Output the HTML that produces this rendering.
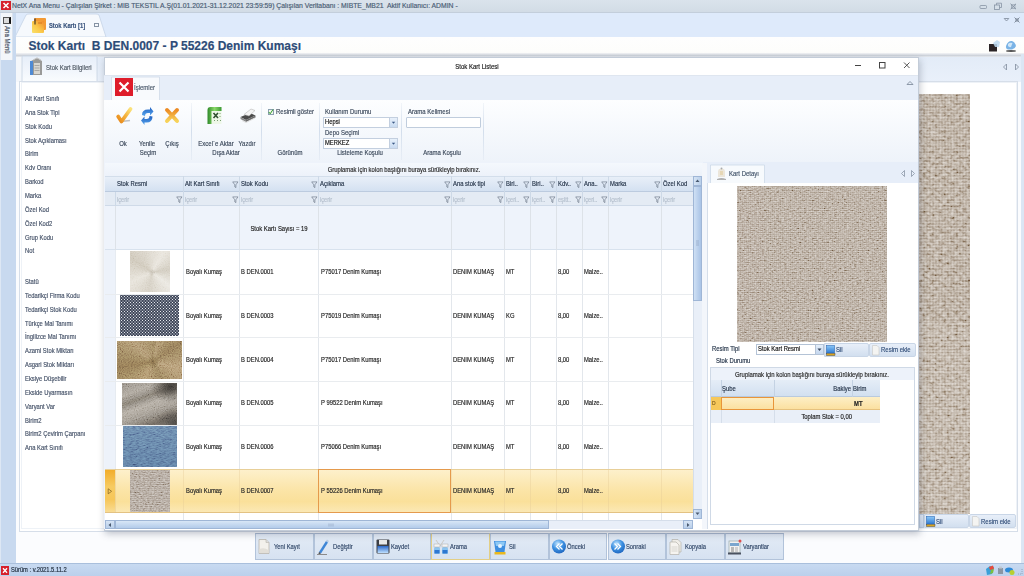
<!DOCTYPE html>
<html><head><meta charset="utf-8">
<style>
*{margin:0;padding:0;box-sizing:border-box}
html,body{width:1024px;height:576px;overflow:hidden;background:#dfeaf9;font-family:"Liberation Sans",sans-serif;font-size:6px;color:#1e2b3c}
.a{position:absolute}
.t{position:absolute;white-space:pre;line-height:1;-webkit-text-stroke:0.18px currentColor}
svg{position:absolute;overflow:visible}
</style></head><body>

<div class="a" style="left:0px;top:0px;width:1024px;height:13px;background:linear-gradient(#dae3ec,#d2dce6);border-bottom:1px solid #c3cedb"></div>
<div class="a" style="left:1px;top:1px;width:10px;height:9px;background:#d6202c"></div>
<svg style="left:1px;top:1px" width="10" height="9"><path d="M2.5 2 L7.5 7 M7.5 2 L2.5 7" stroke="#fff" stroke-width="1.6"/></svg>
<div class="t" style="left:12px;top:2.76px;font-size:6.82px;color:#4b5e76">NetX Ana Menu - Çalışılan Şirket : MIB TEKSTIL A.Ş(01.01.2021-31.12.2021 23:59:59) Çalışılan Veritabanı : MIBTE_MB21  Aktif Kullanıcı: ADMIN -</div>
<svg style="left:978px;top:2px" width="44" height="9"><rect x="2" y="3.5" width="6.5" height="3" rx="0.8" fill="none" stroke="#8693a3" stroke-width="0.8"/><rect x="16.5" y="3" width="5" height="4.5" fill="none" stroke="#8693a3" stroke-width="0.8"/><path d="M18.5 3V1.2H23.5V5.5H21.5" fill="none" stroke="#8693a3" stroke-width="0.8"/><path d="M32.5 1.8L38 7.2M38 1.8L32.5 7.2" stroke="#8693a3" stroke-width="1"/><rect x="33.5" y="2.8" width="3.5" height="3.5" fill="none" stroke="#8693a3" stroke-width="0.6"/></svg>
<div class="a" style="left:14px;top:13px;width:1010px;height:24px;background:#deeafb"></div>
<svg style="left:14px;top:13px" width="95" height="24"><path d="M1 24 L12 2 Q13 1 15 1 L82 1 Q84 1 85 2 L92 24 Z" fill="#f6f9fd" stroke="#c5d3e6" stroke-width="0.8"/></svg>
<svg style="left:31px;top:16.5px" width="16" height="17"><defs><linearGradient id="fo" x1="1" y1="0" x2="0" y2="1"><stop offset="0" stop-color="#f08a2c"/><stop offset=".55" stop-color="#fbc94a"/><stop offset="1" stop-color="#f9e06a"/></linearGradient></defs><rect x="3" y="1" width="12" height="12" rx="1" fill="#f39a34"/><rect x="1" y="4" width="12" height="12" rx="1" fill="url(#fo)"/><path d="M4 1.5V7.5" stroke="#222" stroke-width="1"/><path d="M7 6 L11 6" stroke="#d06a1a" stroke-width=".8"/></svg>
<div class="t" style="left:48.5px;transform-origin:0 50%;top:22.83px;font-size:7.08px;transform:scaleX(0.820);font-weight:bold;color:#3a557e">Stok Kartı [1]</div>
<div class="a" style="left:94px;top:23px;width:5px;height:4px;border:1px solid #8592a3"></div>
<svg style="left:1002px;top:16px" width="20" height="8"><path d="M2.2 2.5 L4.5 5 L6.8 2.5 Z" fill="none" stroke="#7c8898" stroke-width="0.8"/><path d="M12.5 1.5 L17.5 6.5 M17.5 1.5 L12.5 6.5" stroke="#7c8898" stroke-width="0.9"/><rect x="13.5" y="2.5" width="3" height="3" fill="none" stroke="#7c8898" stroke-width="0.5"/></svg>
<div class="a" style="left:14px;top:36.5px;width:1010px;height:16px;background:linear-gradient(#fefefe,#fdfdfb)"></div>
<div class="t" style="left:28.5px;top:40.12px;font-size:12px;font-weight:bold;color:#2d4c78">Stok Kartı  B DEN.0007 - P 55226 Denim Kumaşı</div>
<svg style="left:987px;top:39px" width="32" height="14"><rect x="2" y="5" width="8" height="7.5" fill="#2a2426"/><path d="M6 4 L10 1 L13 3 L12 8 L8 8Z" fill="#bcd8f0" opacity=".85"/><path d="M19 7 Q21 1.5 25 2 Q28 3 29 7 Q28 10 25 10.5 L21 10.5 Q18.5 9.5 19 7Z" fill="#7ab3e6"/><path d="M21 5 Q23 3 25.5 4 L24 8 Q22 8.5 21 7Z" fill="#cfe6f8"/><ellipse cx="24" cy="12" rx="5" ry="0.9" fill="#555"/></svg>
<div class="a" style="left:0px;top:13px;width:15.5px;height:551px;background:#c8d9ef;border-left:1px solid #dde7f4"></div>
<div class="a" style="left:1px;top:13px;width:12px;height:47px;background:#f3f6fa;border-right:1px solid #d9e2ee"></div>
<div class="a" style="left:3px;top:17px;width:8px;height:7px;background:#dcdcdc;border:1px solid #555;border-right:2px solid #111"></div>
<div class="t" style="left:10px;top:26px;font-size:6.6px;color:#4a5566;transform-origin:0 0;transform:rotate(90deg) scaleX(0.92)">Ana Menü</div>
<div class="a" style="left:15.5px;top:54px;width:1008.5px;height:510px;background:#fbfcfe"></div>
<div class="a" style="left:15.5px;top:54px;width:1008.5px;height:28px;background:linear-gradient(#e2ebf7,#e9f0fa)"></div>
<div class="a" style="left:15.5px;top:54px;width:6.5px;height:28px;background:#f4f7fb"></div>
<div class="a" style="left:15.5px;top:52.5px;width:1008.5px;height:4.5px;background:linear-gradient(#f3f4f6,#d3d8df 55%,#c9ced6 70%,#eef1f5)"></div>
<svg style="left:21px;top:55px" width="78" height="27"><path d="M1 27 V2 Q1 1 2 1 H75 Q76 1 76 2 V27" fill="url(#tg)" stroke="#c7d3e2" stroke-width="0.8"/><defs><linearGradient id="tg" x1="0" y1="0" x2="0" y2="1"><stop offset="0" stop-color="#e6eef9"/><stop offset="1" stop-color="#fafcfe"/></linearGradient></defs></svg>
<svg style="left:28px;top:57px" width="17" height="20"><path d="M3 4 L9 1 L14 4 V18 H3 Z" fill="#9a9a98"/><rect x="2" y="4" width="3" height="14" fill="#4f8ad4"/><rect x="6" y="6" width="6" height="11" fill="#d8d6d0"/><path d="M6.5 8.5H11.5M6.5 11H11.5M6.5 13.5H11.5" stroke="#888" stroke-width="0.6"/><path d="M5 3 L9 0.8 L13 3" fill="none" stroke="#c8c8c8" stroke-width="1"/></svg>
<div class="t" style="left:45.5px;transform-origin:0 50%;top:64.21px;font-size:7.32px;transform:scaleX(0.820);color:#505a66">Stok Kart Bilgileri</div>
<div class="a" style="left:18.5px;top:80.5px;width:999px;height:451px;background:#fff;border:1px solid #d6dee9"></div>
<div class="a" style="left:21px;top:82px;width:996px;height:447px;border:1px solid #eef2f7"></div>
<div class="t" style="left:24.5px;transform-origin:0 50%;top:96.00px;font-size:7.14px;transform:scaleX(0.820);color:#465369">Alt Kart Sınıfı</div>
<div class="t" style="left:24.5px;transform-origin:0 50%;top:109.85px;font-size:7.14px;transform:scaleX(0.820);color:#465369">Ana Stok Tipi</div>
<div class="t" style="left:24.5px;transform-origin:0 50%;top:123.70px;font-size:7.14px;transform:scaleX(0.820);color:#465369">Stok Kodu</div>
<div class="t" style="left:24.5px;transform-origin:0 50%;top:137.55px;font-size:7.14px;transform:scaleX(0.820);color:#465369">Stok Açıklaması</div>
<div class="t" style="left:24.5px;transform-origin:0 50%;top:151.40px;font-size:7.14px;transform:scaleX(0.820);color:#465369">Birim</div>
<div class="t" style="left:24.5px;transform-origin:0 50%;top:165.25px;font-size:7.14px;transform:scaleX(0.820);color:#465369">Kdv Oranı</div>
<div class="t" style="left:24.5px;transform-origin:0 50%;top:179.10px;font-size:7.14px;transform:scaleX(0.820);color:#465369">Barkod</div>
<div class="t" style="left:24.5px;transform-origin:0 50%;top:192.95px;font-size:7.14px;transform:scaleX(0.820);color:#465369">Marka</div>
<div class="t" style="left:24.5px;transform-origin:0 50%;top:206.80px;font-size:7.14px;transform:scaleX(0.820);color:#465369">Özel Kod</div>
<div class="t" style="left:24.5px;transform-origin:0 50%;top:220.65px;font-size:7.14px;transform:scaleX(0.820);color:#465369">Özel Kod2</div>
<div class="t" style="left:24.5px;transform-origin:0 50%;top:234.50px;font-size:7.14px;transform:scaleX(0.820);color:#465369">Grup Kodu</div>
<div class="t" style="left:24.5px;transform-origin:0 50%;top:248.35px;font-size:7.14px;transform:scaleX(0.820);color:#465369">Not</div>
<div class="t" style="left:24.5px;transform-origin:0 50%;top:279.00px;font-size:7.14px;transform:scaleX(0.820);color:#465369">Statü</div>
<div class="t" style="left:24.5px;transform-origin:0 50%;top:292.85px;font-size:7.14px;transform:scaleX(0.820);color:#465369">Tedarikçi Firma Kodu</div>
<div class="t" style="left:24.5px;transform-origin:0 50%;top:306.70px;font-size:7.14px;transform:scaleX(0.820);color:#465369">Tedarikçi Stok Kodu</div>
<div class="t" style="left:24.5px;transform-origin:0 50%;top:320.55px;font-size:7.14px;transform:scaleX(0.820);color:#465369">Türkçe Mal Tanımı</div>
<div class="t" style="left:24.5px;transform-origin:0 50%;top:334.40px;font-size:7.14px;transform:scaleX(0.820);color:#465369">İngilizce Mal Tanımı</div>
<div class="t" style="left:24.5px;transform-origin:0 50%;top:348.25px;font-size:7.14px;transform:scaleX(0.820);color:#465369">Azami Stok Miktarı</div>
<div class="t" style="left:24.5px;transform-origin:0 50%;top:362.10px;font-size:7.14px;transform:scaleX(0.820);color:#465369">Asgari Stok Miktarı</div>
<div class="t" style="left:24.5px;transform-origin:0 50%;top:375.95px;font-size:7.14px;transform:scaleX(0.820);color:#465369">Eksiye Düşebilir</div>
<div class="t" style="left:24.5px;transform-origin:0 50%;top:389.80px;font-size:7.14px;transform:scaleX(0.820);color:#465369">Ekside Uyarmasın</div>
<div class="t" style="left:24.5px;transform-origin:0 50%;top:403.65px;font-size:7.14px;transform:scaleX(0.820);color:#465369">Varyant Var</div>
<div class="t" style="left:24.5px;transform-origin:0 50%;top:417.50px;font-size:7.14px;transform:scaleX(0.820);color:#465369">Birim2</div>
<div class="t" style="left:24.5px;transform-origin:0 50%;top:431.35px;font-size:7.14px;transform:scaleX(0.820);color:#465369">Birim2 Çevirim Çarpanı</div>
<div class="t" style="left:24.5px;transform-origin:0 50%;top:445.20px;font-size:7.14px;transform:scaleX(0.820);color:#465369">Ana Kart Sınıfı</div>
<svg style="left:1002px;top:63px" width="18" height="8"><path d="M4.5 1 L1.5 4 L4.5 7 Z M13.5 1 L16.5 4 L13.5 7 Z" fill="none" stroke="#8a96a6" stroke-width="0.9"/></svg>
<div class="a" style="left:1021px;top:54px;width:3px;height:510px;background:#dbe6f4"></div>
<div class="a" style="left:919px;top:94px;width:51px;height:420px;background:repeating-linear-gradient(0deg,rgba(255,255,255,.12) 0 1.5px,rgba(60,40,20,.08) 1.5px 3px),repeating-linear-gradient(90deg,rgba(255,255,255,.1) 0 1.5px,rgba(60,40,20,.06) 1.5px 3px),#b3a493;isolation:isolate;overflow:hidden"><svg style="left:0;top:0;mix-blend-mode:overlay;opacity:0.5" width="51" height="420"><filter id="nz1" x="0" y="0" width="100%" height="100%"><feTurbulence type="fractalNoise" baseFrequency="0.25 0.35" numOctaves="2" seed="7"/><feColorMatrix values="1.6 0 0 0 -0.3  1.6 0 0 0 -0.3  1.6 0 0 0 -0.3  0 0 0 0 1"/></filter><rect width="51" height="420" filter="url(#nz1)"/></svg></div>
<div class="a" style="left:919px;top:514px;width:5px;height:14px;background:linear-gradient(#e0e9f6,#c8d8ee);border:1px solid #b9c9de"></div>
<div class="a" style="left:924px;top:514px;width:45px;height:14px;background:linear-gradient(#e8eff9,#d2dfef);border:1px solid #c9d6e7;border-radius:0 2px 2px 0"></div>
<svg style="left:925.5px;top:516px" width="10" height="11"><rect x="0.5" y="0.5" width="8" height="7.5" fill="url(#mon)" stroke="#2f6db8" stroke-width="0.6"/><rect x="0.5" y="8.5" width="8.5" height="2" fill="#d9a520" stroke="#333" stroke-width="0.4"/><defs><linearGradient id="mon" x1="0" y1="0" x2="0" y2="1"><stop offset="0" stop-color="#8cc8f8"/><stop offset="1" stop-color="#2f7ad0"/></linearGradient></defs></svg>
<div class="t" style="left:935.5px;transform-origin:0 50%;top:517.61px;font-size:7.32px;transform:scaleX(0.820);color:#34507a">Sil</div>
<div class="a" style="left:969px;top:514px;width:46.5px;height:14px;background:linear-gradient(#e8eff9,#d2dfef);border:1px solid #c9d6e7;border-radius:2px"></div>
<svg style="left:971px;top:516px" width="9" height="11"><path d="M1.5 0.5 H6 L8 2.5 V10 H1.5 Z" fill="#f4f4f2" stroke="#c8c8c4" stroke-width="0.6"/></svg>
<div class="t" style="left:980.5px;transform-origin:0 50%;top:517.61px;font-size:7.32px;transform:scaleX(0.820);color:#34507a">Resim ekle</div>
<div class="a" style="left:255.3px;top:533px;width:58.7px;height:27px;background:linear-gradient(#e3ebf6,#d6e2f1);border:1px solid #b2c3da;border-top-color:#a9b9cf"></div>
<svg style="left:257.3px;top:538px" width="16" height="18"><path d="M2 1.5 H9 L12 4.5 V15.5 H2 Z" fill="#f3f1ec" stroke="#b9b5ad" stroke-width="0.8"/><path d="M9 1.5 V4.5 H12" fill="#ddd" stroke="#b9b5ad" stroke-width="0.6"/><path d="M2.5 11 Q7 9 11.5 12 V15 H2.5Z" fill="#e2dfd8"/></svg>
<div class="t" style="left:273.8px;transform-origin:0 50%;top:543.63px;font-size:7.08px;transform:scaleX(0.820);color:#33496a">Yeni Kayıt</div>
<div class="a" style="left:314.0px;top:533px;width:58.7px;height:27px;background:linear-gradient(#e3ebf6,#d6e2f1);border:1px solid #b2c3da;border-top-color:#a9b9cf"></div>
<svg style="left:316.0px;top:538px" width="16" height="18"><path d="M3 14 L10 3 L12 4.5 L5 15.5 Z" fill="#3f86d6"/><path d="M10 3 L11 1.5 L13 3 L12 4.5Z" fill="#b9cde5"/><path d="M3 14 L2.5 16 L5 15.5Z" fill="#333"/><path d="M1 16.5 H11" stroke="#8a8a8a" stroke-width="1"/></svg>
<div class="t" style="left:332.5px;transform-origin:0 50%;top:543.63px;font-size:7.08px;transform:scaleX(0.820);color:#33496a">Değiştir</div>
<div class="a" style="left:372.7px;top:533px;width:58.7px;height:27px;background:linear-gradient(#e3ebf6,#d6e2f1);border:1px solid #b2c3da;border-top-color:#a9b9cf"></div>
<svg style="left:374.7px;top:538px" width="16" height="18"><rect x="1.5" y="1.5" width="13" height="14" rx="1" fill="#3d3f45"/><rect x="4" y="2" width="8" height="4.5" fill="#e8e8e8"/><rect x="2.5" y="8" width="11" height="7" fill="url(#flg)"/><defs><linearGradient id="flg" x1="0" y1="0" x2="0" y2="1"><stop offset="0" stop-color="#2a67c8"/><stop offset="1" stop-color="#bfe0ff"/></linearGradient></defs></svg>
<div class="t" style="left:391.20000000000005px;transform-origin:0 50%;top:543.63px;font-size:7.08px;transform:scaleX(0.820);color:#33496a">Kaydet</div>
<div class="a" style="left:431.4px;top:533px;width:58.7px;height:27px;background:linear-gradient(#e3ebf6,#d6e2f1);border:1px solid #e3cf86;border-top-color:#a9b9cf"></div>
<svg style="left:433.4px;top:538px" width="16" height="18"><path d="M3 2 L7 8 L11 2" fill="none" stroke="#c8c2b8" stroke-width="0.8"/><rect x="1" y="9" width="6" height="7" rx="1.5" fill="#8cc4f0"/><rect x="9" y="9" width="6" height="7" rx="1.5" fill="#8cc4f0"/><rect x="1.5" y="12" width="5" height="3.5" fill="#2f78d0"/><rect x="9.5" y="12" width="5" height="3.5" fill="#2f78d0"/><rect x="1" y="6" width="6" height="3" fill="#f4f4f4" stroke="#aaa" stroke-width=".5"/><rect x="9" y="6" width="6" height="3" fill="#f4f4f4" stroke="#aaa" stroke-width=".5"/></svg>
<div class="t" style="left:449.90000000000003px;transform-origin:0 50%;top:543.63px;font-size:7.08px;transform:scaleX(0.820);color:#33496a">Arama</div>
<div class="a" style="left:490.1px;top:533px;width:58.7px;height:27px;background:linear-gradient(#e3ebf6,#d6e2f1);border:1px solid #b2c3da;border-top-color:#a9b9cf"></div>
<svg style="left:492.1px;top:538px" width="16" height="18"><path d="M2 3 H14 L12.5 14 H3.5 Z" fill="#3d8ee0"/><path d="M3 3.5 H13 L12 8 H4Z" fill="#8cc8f5"/><circle cx="8" cy="8" r="2" fill="#e8f4ff"/><rect x="2.5" y="14" width="11" height="2.5" fill="#e8b820"/></svg>
<div class="t" style="left:508.6px;transform-origin:0 50%;top:543.63px;font-size:7.08px;transform:scaleX(0.820);color:#33496a">Sil</div>
<div class="a" style="left:548.8px;top:533px;width:58.7px;height:27px;background:linear-gradient(#e3ebf6,#d6e2f1);border:1px solid #b2c3da;border-top-color:#a9b9cf"></div>
<svg style="left:550.8px;top:538px" width="16" height="18"><circle cx="8" cy="8.5" r="7" fill="url(#sph)"/><path d="M8.5 5.5 L5.5 8.5 L8.5 11.5 M11.5 5.5 L8.5 8.5 L11.5 11.5" fill="none" stroke="#fff" stroke-width="1.3"/><defs><radialGradient id="sph" cx=".4" cy=".3" r=".8"><stop offset="0" stop-color="#bfe4ff"/><stop offset=".5" stop-color="#3b8fe0"/><stop offset="1" stop-color="#1a5db8"/></radialGradient></defs></svg>
<div class="t" style="left:567.3px;transform-origin:0 50%;top:543.63px;font-size:7.08px;transform:scaleX(0.820);color:#33496a">Önceki</div>
<div class="a" style="left:607.5px;top:533px;width:58.7px;height:27px;background:linear-gradient(#e3ebf6,#d6e2f1);border:1px solid #b2c3da;border-top-color:#a9b9cf"></div>
<svg style="left:609.5px;top:538px" width="16" height="18"><circle cx="8" cy="8.5" r="7" fill="url(#sph)"/><path d="M7.5 5.5 L10.5 8.5 L7.5 11.5 M4.5 5.5 L7.5 8.5 L4.5 11.5" fill="none" stroke="#fff" stroke-width="1.3"/></svg>
<div class="t" style="left:626.0px;transform-origin:0 50%;top:543.63px;font-size:7.08px;transform:scaleX(0.820);color:#33496a">Sonraki</div>
<div class="a" style="left:666.2px;top:533px;width:58.7px;height:27px;background:linear-gradient(#e3ebf6,#d6e2f1);border:1px solid #b2c3da;border-top-color:#a9b9cf"></div>
<svg style="left:668.2px;top:538px" width="16" height="18"><path d="M4 1.5 H10 L13 4.5 V14 H4 Z" fill="#f0eee9" stroke="#b5b1aa" stroke-width="0.7"/><path d="M2 4 H8 L11 7 V16.5 H2 Z" fill="#f6f4f0" stroke="#b5b1aa" stroke-width="0.7"/><path d="M3.5 9H9.5M3.5 11H9.5M3.5 13H9.5" stroke="#c8c4bc" stroke-width="0.6"/></svg>
<div class="t" style="left:684.7px;transform-origin:0 50%;top:543.63px;font-size:7.08px;transform:scaleX(0.820);color:#33496a">Kopyala</div>
<div class="a" style="left:724.9px;top:533px;width:58.7px;height:27px;background:linear-gradient(#e3ebf6,#d6e2f1);border:1px solid #b2c3da;border-top-color:#a9b9cf"></div>
<svg style="left:726.9px;top:538px" width="16" height="18"><rect x="2" y="3" width="11" height="12" fill="#f2f2f2" stroke="#9aa" stroke-width="0.7"/><rect x="3" y="5" width="9" height="3" fill="#7aa6cf"/><rect x="4" y="9" width="3" height="5" fill="#b8b8b8"/><rect x="8" y="9" width="3" height="5" fill="#d0d0d0"/><rect x="1" y="14.5" width="13" height="2" fill="#4a5260"/><circle cx="13" cy="3" r="1.5" fill="#e05050"/></svg>
<div class="t" style="left:743.4000000000001px;transform-origin:0 50%;top:543.63px;font-size:7.08px;transform:scaleX(0.820);color:#33496a">Varyantlar</div>
<div class="a" style="left:0px;top:563px;width:1024px;height:13px;background:linear-gradient(#c8daf1,#bbd0ec);border-top:1px solid #a9bfdc"></div>
<div class="a" style="left:1px;top:566px;width:8px;height:9px;background:#d6202c"></div>
<svg style="left:1px;top:566px" width="8" height="9"><path d="M2 2.2L6 6.7M6 2.2L2 6.7" stroke="#fff" stroke-width="1.3"/></svg>
<div class="t" style="left:11px;transform-origin:0 50%;top:566.06px;font-size:7.01px;transform:scaleX(0.820);color:#1d2a3a">Sürüm : v.2021.5.11.2</div>
<svg style="left:985px;top:565px" width="39" height="11"><path d="M1 4 L5 1 L9 2 L7 9 L2 10 Z" fill="#3aa0d8"/><path d="M4 2 L8 0.5 L9 4 L5 5Z" fill="#e84a3a"/><path d="M6 5 L9 4 L8 8 L5 9Z" fill="#7cc040"/><rect x="13" y="3" width="5" height="6" fill="#8a96a4"/><rect x="14" y="1.5" width="3" height="2" fill="#c0c8d2"/><ellipse cx="24" cy="5" rx="4" ry="2.5" fill="#2e8ad8"/><circle cx="27" cy="7.5" r="2.5" fill="#b8d030"/><path d="M37 4V9H32" fill="none" stroke="#8a9ab0" stroke-width="0.8" stroke-dasharray="1 1"/></svg>
<div class="a" style="left:104px;top:57px;width:815px;height:474px;background:#fff;border:1px solid #c3ccd8;box-shadow:1px 3px 7px rgba(60,70,90,0.3)"></div>
<div class="t" style="left:277px;width:400px;text-align:center;transform-origin:50% 50%;top:63.01px;font-size:7.32px;transform:scaleX(0.820);color:#1a1a1a">Stok Kart Listesi</div>
<svg style="left:850px;top:60px" width="64" height="12"><path d="M5 5.5 H11" stroke="#444" stroke-width="1"/><rect x="29.5" y="2.5" width="5.5" height="5.5" fill="none" stroke="#444" stroke-width="1"/><path d="M54 2.5 L59.5 8 M59.5 2.5 L54 8" stroke="#444" stroke-width="0.9"/></svg>
<div class="a" style="left:104px;top:74.5px;width:814px;height:25.5px;background:#e7eef9;border-top:1px solid #dfe6f0"></div>
<svg style="left:111px;top:76px" width="50" height="25"><path d="M0.5 25 V1 H48.5 V25" fill="#f8fafd" stroke="#d0dbe9" stroke-width="0.8"/></svg>
<div class="a" style="left:115px;top:78px;width:18px;height:18px;background:#de1c2a"></div>
<svg style="left:115px;top:78px" width="18" height="18"><path d="M4.5 4.5 L13.5 13.5 M13.5 4.5 L4.5 13.5" stroke="#fff" stroke-width="2.2"/></svg>
<div class="t" style="left:133.5px;transform-origin:0 50%;top:83.91px;font-size:7.32px;transform:scaleX(0.820);color:#4c5a6c">İşlemler</div>
<svg style="left:906px;top:80px" width="8" height="6"><path d="M1 4.5 L4 1.5 L7 4.5 Z" fill="none" stroke="#8390a0" stroke-width="0.9"/></svg>
<div class="a" style="left:104px;top:100px;width:814px;height:63px;background:linear-gradient(#fdfeff,#eef3fa);border-bottom:1px solid #c9d5e6"></div>
<div class="a" style="left:190.5px;top:103px;width:1px;height:57px;background:linear-gradient(rgba(200,212,228,0.2),#d3deec,rgba(200,212,228,0.2))"></div>
<div class="a" style="left:261px;top:103px;width:1px;height:57px;background:linear-gradient(rgba(200,212,228,0.2),#d3deec,rgba(200,212,228,0.2))"></div>
<div class="a" style="left:318.5px;top:103px;width:1px;height:57px;background:linear-gradient(rgba(200,212,228,0.2),#d3deec,rgba(200,212,228,0.2))"></div>
<div class="a" style="left:400.5px;top:103px;width:1px;height:57px;background:linear-gradient(rgba(200,212,228,0.2),#d3deec,rgba(200,212,228,0.2))"></div>
<div class="a" style="left:483px;top:103px;width:1px;height:57px;background:linear-gradient(rgba(200,212,228,0.2),#d3deec,rgba(200,212,228,0.2))"></div>
<svg style="left:112px;top:104px" width="74" height="22"><defs><linearGradient id="ck" x1="0" y1="1" x2="1" y2="0"><stop offset="0" stop-color="#e8891a"/><stop offset=".6" stop-color="#f6b843"/><stop offset="1" stop-color="#fbe27a"/></linearGradient><linearGradient id="cx" x1="0" y1="0" x2="0" y2="1"><stop offset="0" stop-color="#ec8b25"/><stop offset="1" stop-color="#f7d35a"/></linearGradient><linearGradient id="rf" x1="0" y1="0" x2="0" y2="1"><stop offset="0" stop-color="#1f5fc0"/><stop offset="1" stop-color="#58a6ee"/></linearGradient></defs><path d="M9 17.5 L18 16.5" stroke="#9a9a9a" stroke-width="1.6" opacity=".6"/><path d="M6.2 12.5 L9.5 17.5 L18.5 5" fill="none" stroke="url(#ck)" stroke-width="3.8" stroke-linecap="round" stroke-linejoin="round"/><path d="M30 11 Q30 5.5 36 5.5 L38 5.5 L38 3 L41.5 7.5 L38 11.5 L38 9 L36 9 Q33 9 33 12 Z" fill="url(#rf)"/><path d="M40.5 12.5 Q40.5 18.5 34.5 18.5 L32.5 18.5 L32.5 21 L29 16.5 L32.5 12.5 L32.5 15 L34.5 15 Q37.5 15 37.5 12 Z" fill="url(#rf)"/><path d="M55 6 L65 17 M65 6 L55 17" stroke="url(#cx)" stroke-width="4" stroke-linecap="round"/></svg>
<div class="t" style="left:-77px;width:400px;text-align:center;transform-origin:50% 50%;top:140.11px;font-size:7.32px;transform:scaleX(0.820);color:#3d4a5c">Ok</div>
<div class="t" style="left:-53.5px;width:400px;text-align:center;transform-origin:50% 50%;top:140.11px;font-size:7.32px;transform:scaleX(0.820);color:#3d4a5c">Yenile</div>
<div class="t" style="left:-28px;width:400px;text-align:center;transform-origin:50% 50%;top:140.11px;font-size:7.32px;transform:scaleX(0.820);color:#3d4a5c">Çıkış</div>
<div class="t" style="left:-52px;width:400px;text-align:center;transform-origin:50% 50%;top:149.41px;font-size:7.32px;transform:scaleX(0.820);color:#3d4a5c">Seçim</div>
<svg style="left:205px;top:105px" width="55" height="22"><defs><linearGradient id="xg" x1="0" y1="0" x2="1" y2="0"><stop offset="0" stop-color="#2f8a2a"/><stop offset=".5" stop-color="#8ad86a"/><stop offset="1" stop-color="#3c9a34"/></linearGradient></defs><rect x="5.5" y="4" width="11" height="15" fill="#eef7e8"/><path d="M2.5 19 V5 Q2.5 2 5.5 2 H16.5 V6 H6.5 V19 Z" fill="url(#xg)"/><path d="M8.5 8 L13 13 M13 8 L8.5 13" stroke="#2f4f2f" stroke-width="1.6"/><path d="M15 8V9M15 11V12M9 15.5H10M12 15.5H13M15 15.5H16" stroke="#7aa070" stroke-width="1"/><path d="M35.5 12 L45 8 L50.5 10.5 L41 15 Z" fill="#4a4a4a"/><path d="M35.5 12 L41 15 L41 17 L35.5 14 Z" fill="#8a8a8a"/><path d="M41 15 L50.5 10.5 L50.5 12.5 L41 17 Z" fill="#6a6a6a"/><path d="M39 9.5 L46 4 L50 5.5 L44 11Z" fill="#f4f4f4" stroke="#aaa" stroke-width=".5"/><path d="M37 15.5 L41 17.5 L50 13" fill="none" stroke="#ddd" stroke-width="1"/></svg>
<div class="t" style="left:16px;width:400px;text-align:center;transform-origin:50% 50%;top:140.11px;font-size:7.32px;transform:scaleX(0.820);color:#3d4a5c">Excel`e Aktar</div>
<div class="t" style="left:47px;width:400px;text-align:center;transform-origin:50% 50%;top:140.11px;font-size:7.32px;transform:scaleX(0.820);color:#3d4a5c">Yazdır</div>
<div class="t" style="left:26px;width:400px;text-align:center;transform-origin:50% 50%;top:149.41px;font-size:7.32px;transform:scaleX(0.820);color:#3d4a5c">Dışa Aktar</div>
<div class="a" style="left:267.5px;top:108.5px;width:6.5px;height:6.5px;background:#f4f8ec;border:1px solid #8aa0b0"></div>
<svg style="left:267px;top:108px" width="8" height="8"><path d="M1.8 4 L3.2 5.8 L6 1.5" fill="none" stroke="#2f9a2f" stroke-width="1"/></svg>
<div class="t" style="left:275.5px;transform-origin:0 50%;top:107.91px;font-size:7.32px;transform:scaleX(0.820);color:#3d4a5c">Resimli göster</div>
<div class="t" style="left:90px;width:400px;text-align:center;transform-origin:50% 50%;top:149.41px;font-size:7.32px;transform:scaleX(0.820);color:#3d4a5c">Görünüm</div>
<div class="t" style="left:324.5px;transform-origin:0 50%;top:108.01px;font-size:7.32px;transform:scaleX(0.820);color:#3d4a5c">Kullanım Durumu</div>
<div class="a" style="left:323px;top:116.5px;width:75px;height:11px;background:#fff;border:1px solid #c3cfdf"></div>
<div class="a" style="left:389px;top:117.5px;width:8px;height:9px;background:linear-gradient(#e8f1fb,#c9dbf1);border-left:1px solid #c3cfdf"></div>
<svg style="left:391px;top:120.5px" width="5" height="4"><path d="M0.8 0.8 H4.2 L2.5 2.8 Z" fill="#3c5a86"/></svg>
<div class="t" style="left:325px;transform-origin:0 50%;top:119.03px;font-size:7.08px;transform:scaleX(0.820);color:#111">Hepsi</div>
<div class="a" style="left:323px;top:137.7px;width:75px;height:11px;background:#fff;border:1px solid #c3cfdf"></div>
<div class="a" style="left:389px;top:138.7px;width:8px;height:9px;background:linear-gradient(#e8f1fb,#c9dbf1);border-left:1px solid #c3cfdf"></div>
<svg style="left:391px;top:141.7px" width="5" height="4"><path d="M0.8 0.8 H4.2 L2.5 2.8 Z" fill="#3c5a86"/></svg>
<div class="t" style="left:325px;transform-origin:0 50%;top:140.23px;font-size:7.08px;transform:scaleX(0.820);color:#111">MERKEZ</div>
<div class="t" style="left:324.5px;transform-origin:0 50%;top:129.21px;font-size:7.32px;transform:scaleX(0.820);color:#3d4a5c">Depo Seçimi</div>
<div class="t" style="left:159.5px;width:400px;text-align:center;transform-origin:50% 50%;top:149.41px;font-size:7.32px;transform:scaleX(0.820);color:#3d4a5c">Listeleme Koşulu</div>
<div class="t" style="left:407.5px;transform-origin:0 50%;top:108.01px;font-size:7.32px;transform:scaleX(0.820);color:#3d4a5c">Arama Kelimesi</div>
<div class="a" style="left:406px;top:116.5px;width:75px;height:11px;background:#fff;border:1px solid #c0cddd;border-radius:1px"></div>
<div class="t" style="left:242px;width:400px;text-align:center;transform-origin:50% 50%;top:149.41px;font-size:7.32px;transform:scaleX(0.820);color:#3d4a5c">Arama Koşulu</div>
<div class="a" style="left:104px;top:162px;width:599px;height:367px;background:#eef3fb"></div>
<div class="a" style="left:105px;top:163px;width:597px;height:13px;background:linear-gradient(#f4f8fd,#edf2fa)"></div>
<div class="t" style="left:203.5px;width:400px;text-align:center;transform-origin:50% 50%;top:166.47px;font-size:7.20px;transform:scaleX(0.820);color:#2b2b2b">Gruplamak için kolon başlığını buraya sürükleyip bırakınız.</div>
<div class="a" style="left:105px;top:175.5px;width:588px;height:16.5px;background:linear-gradient(#e8eff8,#d4e1f1);border-top:1px solid #d3deeb;border-bottom:1px solid #bccbdf"></div>
<div class="a" style="left:105px;top:192px;width:588px;height:14px;background:#e4ebf4;border-bottom:1px solid #cfdae8"></div>
<div class="a" style="left:115px;top:192px;width:1px;height:14px;background:#cdd9e7"></div>
<div class="a" style="left:115px;top:176px;width:68px;height:30px;overflow:hidden">
<div class="t" style="left:1.5px;transform-origin:0 50%;top:4.47px;font-size:7.20px;transform:scaleX(0.820);color:#26354a">Stok Resmi</div>
<div class="t" style="left:1.5px;transform-origin:0 50%;top:20.65px;font-size:6.83px;transform:scaleX(0.820);color:#b4bfcc">içerir</div>
</div>
<div class="a" style="left:183px;top:176px;width:1px;height:30px;background:#cdd9e7"></div>
<div class="a" style="left:183px;top:176px;width:48px;height:30px;overflow:hidden">
<div class="t" style="left:1.5px;transform-origin:0 50%;top:4.47px;font-size:7.20px;transform:scaleX(0.820);color:#26354a">Alt Kart Sınıfı</div>
<div class="t" style="left:1.5px;transform-origin:0 50%;top:20.65px;font-size:6.83px;transform:scaleX(0.820);color:#b4bfcc">içerir</div>
</div>
<svg style="left:231.5px;top:180.5px" width="7" height="25"><path d="M0.7 0.9 H6 L3.9 3.8 V6.6 L2.8 5.9 V3.8 Z" fill="none" stroke="#5f6c7d" stroke-width="0.6"/><path d="M0.7 15.9 H6 L3.9 18.8 V21.6 L2.8 20.9 V18.8 Z" fill="none" stroke="#5f6c7d" stroke-width="0.6"/></svg>
<div class="a" style="left:239px;top:176px;width:1px;height:30px;background:#cdd9e7"></div>
<div class="a" style="left:239px;top:176px;width:71px;height:30px;overflow:hidden">
<div class="t" style="left:1.5px;transform-origin:0 50%;top:4.47px;font-size:7.20px;transform:scaleX(0.820);color:#26354a">Stok Kodu</div>
<div class="t" style="left:1.5px;transform-origin:0 50%;top:20.65px;font-size:6.83px;transform:scaleX(0.820);color:#b4bfcc">içerir</div>
</div>
<svg style="left:310.5px;top:180.5px" width="7" height="25"><path d="M0.7 0.9 H6 L3.9 3.8 V6.6 L2.8 5.9 V3.8 Z" fill="none" stroke="#5f6c7d" stroke-width="0.6"/><path d="M0.7 15.9 H6 L3.9 18.8 V21.6 L2.8 20.9 V18.8 Z" fill="none" stroke="#5f6c7d" stroke-width="0.6"/></svg>
<div class="a" style="left:318px;top:176px;width:1px;height:30px;background:#cdd9e7"></div>
<div class="a" style="left:318px;top:176px;width:125px;height:30px;overflow:hidden">
<div class="t" style="left:1.5px;transform-origin:0 50%;top:4.47px;font-size:7.20px;transform:scaleX(0.820);color:#26354a">Açıklama</div>
<div class="t" style="left:1.5px;transform-origin:0 50%;top:20.65px;font-size:6.83px;transform:scaleX(0.820);color:#b4bfcc">içerir</div>
</div>
<svg style="left:443.5px;top:180.5px" width="7" height="25"><path d="M0.7 0.9 H6 L3.9 3.8 V6.6 L2.8 5.9 V3.8 Z" fill="none" stroke="#5f6c7d" stroke-width="0.6"/><path d="M0.7 15.9 H6 L3.9 18.8 V21.6 L2.8 20.9 V18.8 Z" fill="none" stroke="#5f6c7d" stroke-width="0.6"/></svg>
<div class="a" style="left:451px;top:176px;width:1px;height:30px;background:#cdd9e7"></div>
<div class="a" style="left:451px;top:176px;width:45px;height:30px;overflow:hidden">
<div class="t" style="left:1.5px;transform-origin:0 50%;top:4.47px;font-size:7.20px;transform:scaleX(0.820);color:#26354a">Ana stok tipi</div>
<div class="t" style="left:1.5px;transform-origin:0 50%;top:20.65px;font-size:6.83px;transform:scaleX(0.820);color:#b4bfcc">içerir</div>
</div>
<svg style="left:496.5px;top:180.5px" width="7" height="25"><path d="M0.7 0.9 H6 L3.9 3.8 V6.6 L2.8 5.9 V3.8 Z" fill="none" stroke="#5f6c7d" stroke-width="0.6"/><path d="M0.7 15.9 H6 L3.9 18.8 V21.6 L2.8 20.9 V18.8 Z" fill="none" stroke="#5f6c7d" stroke-width="0.6"/></svg>
<div class="a" style="left:504px;top:176px;width:1px;height:30px;background:#cdd9e7"></div>
<div class="a" style="left:504px;top:176px;width:18px;height:30px;overflow:hidden">
<div class="t" style="left:1.5px;transform-origin:0 50%;top:4.47px;font-size:7.20px;transform:scaleX(0.820);color:#26354a">Biri..</div>
<div class="t" style="left:1.5px;transform-origin:0 50%;top:20.65px;font-size:6.83px;transform:scaleX(0.820);color:#b4bfcc">içeri..</div>
</div>
<svg style="left:522.5px;top:180.5px" width="7" height="25"><path d="M0.7 0.9 H6 L3.9 3.8 V6.6 L2.8 5.9 V3.8 Z" fill="none" stroke="#5f6c7d" stroke-width="0.6"/><path d="M0.7 15.9 H6 L3.9 18.8 V21.6 L2.8 20.9 V18.8 Z" fill="none" stroke="#5f6c7d" stroke-width="0.6"/></svg>
<div class="a" style="left:530px;top:176px;width:1px;height:30px;background:#cdd9e7"></div>
<div class="a" style="left:530px;top:176px;width:18px;height:30px;overflow:hidden">
<div class="t" style="left:1.5px;transform-origin:0 50%;top:4.47px;font-size:7.20px;transform:scaleX(0.820);color:#26354a">Biri..</div>
<div class="t" style="left:1.5px;transform-origin:0 50%;top:20.65px;font-size:6.83px;transform:scaleX(0.820);color:#b4bfcc">içeri..</div>
</div>
<svg style="left:548.5px;top:180.5px" width="7" height="25"><path d="M0.7 0.9 H6 L3.9 3.8 V6.6 L2.8 5.9 V3.8 Z" fill="none" stroke="#5f6c7d" stroke-width="0.6"/><path d="M0.7 15.9 H6 L3.9 18.8 V21.6 L2.8 20.9 V18.8 Z" fill="none" stroke="#5f6c7d" stroke-width="0.6"/></svg>
<div class="a" style="left:556px;top:176px;width:1px;height:30px;background:#cdd9e7"></div>
<div class="a" style="left:556px;top:176px;width:18px;height:30px;overflow:hidden">
<div class="t" style="left:1.5px;transform-origin:0 50%;top:4.47px;font-size:7.20px;transform:scaleX(0.820);color:#26354a">Kdv..</div>
<div class="t" style="left:1.5px;transform-origin:0 50%;top:20.65px;font-size:6.83px;transform:scaleX(0.820);color:#b4bfcc">eşitt..</div>
</div>
<svg style="left:574.5px;top:180.5px" width="7" height="25"><path d="M0.7 0.9 H6 L3.9 3.8 V6.6 L2.8 5.9 V3.8 Z" fill="none" stroke="#5f6c7d" stroke-width="0.6"/><path d="M0.7 15.9 H6 L3.9 18.8 V21.6 L2.8 20.9 V18.8 Z" fill="none" stroke="#5f6c7d" stroke-width="0.6"/></svg>
<div class="a" style="left:582px;top:176px;width:1px;height:30px;background:#cdd9e7"></div>
<div class="a" style="left:582px;top:176px;width:18px;height:30px;overflow:hidden">
<div class="t" style="left:1.5px;transform-origin:0 50%;top:4.47px;font-size:7.20px;transform:scaleX(0.820);color:#26354a">Ana..</div>
<div class="t" style="left:1.5px;transform-origin:0 50%;top:20.65px;font-size:6.83px;transform:scaleX(0.820);color:#b4bfcc">içeri..</div>
</div>
<svg style="left:600.5px;top:180.5px" width="7" height="25"><path d="M0.7 0.9 H6 L3.9 3.8 V6.6 L2.8 5.9 V3.8 Z" fill="none" stroke="#5f6c7d" stroke-width="0.6"/><path d="M0.7 15.9 H6 L3.9 18.8 V21.6 L2.8 20.9 V18.8 Z" fill="none" stroke="#5f6c7d" stroke-width="0.6"/></svg>
<div class="a" style="left:608px;top:176px;width:1px;height:30px;background:#cdd9e7"></div>
<div class="a" style="left:608px;top:176px;width:45px;height:30px;overflow:hidden">
<div class="t" style="left:1.5px;transform-origin:0 50%;top:4.47px;font-size:7.20px;transform:scaleX(0.820);color:#26354a">Marka</div>
<div class="t" style="left:1.5px;transform-origin:0 50%;top:20.65px;font-size:6.83px;transform:scaleX(0.820);color:#b4bfcc">içerir</div>
</div>
<svg style="left:653.5px;top:180.5px" width="7" height="25"><path d="M0.7 0.9 H6 L3.9 3.8 V6.6 L2.8 5.9 V3.8 Z" fill="none" stroke="#5f6c7d" stroke-width="0.6"/><path d="M0.7 15.9 H6 L3.9 18.8 V21.6 L2.8 20.9 V18.8 Z" fill="none" stroke="#5f6c7d" stroke-width="0.6"/></svg>
<div class="a" style="left:661px;top:176px;width:1px;height:30px;background:#cdd9e7"></div>
<div class="a" style="left:661px;top:176px;width:32px;height:30px;overflow:hidden">
<div class="t" style="left:1.5px;transform-origin:0 50%;top:4.47px;font-size:7.20px;transform:scaleX(0.820);color:#26354a">Özel Kod</div>
<div class="t" style="left:1.5px;transform-origin:0 50%;top:20.65px;font-size:6.83px;transform:scaleX(0.820);color:#b4bfcc">içerir</div>
</div>
<svg style="left:175.5px;top:195.5px" width="7" height="8"><path d="M0.7 0.9 H6 L3.9 3.8 V6.6 L2.8 5.9 V3.8 Z" fill="none" stroke="#5f6c7d" stroke-width="0.6"/></svg>
<div class="a" style="left:105px;top:206px;width:588px;height:44px;background:#eef3fb;border-bottom:1px solid #d8e2ee"></div>
<div class="a" style="left:115px;top:206px;width:1px;height:44px;background:#dde2e8"></div>
<div class="a" style="left:183px;top:206px;width:1px;height:44px;background:#dde2e8"></div>
<div class="a" style="left:239px;top:206px;width:1px;height:44px;background:#dde2e8"></div>
<div class="a" style="left:318px;top:206px;width:1px;height:44px;background:#dde2e8"></div>
<div class="a" style="left:451px;top:206px;width:1px;height:44px;background:#dde2e8"></div>
<div class="a" style="left:504px;top:206px;width:1px;height:44px;background:#dde2e8"></div>
<div class="a" style="left:530px;top:206px;width:1px;height:44px;background:#dde2e8"></div>
<div class="a" style="left:556px;top:206px;width:1px;height:44px;background:#dde2e8"></div>
<div class="a" style="left:582px;top:206px;width:1px;height:44px;background:#dde2e8"></div>
<div class="a" style="left:608px;top:206px;width:1px;height:44px;background:#dde2e8"></div>
<div class="a" style="left:661px;top:206px;width:1px;height:44px;background:#dde2e8"></div>
<div class="t" style="left:78.5px;width:400px;text-align:center;transform-origin:50% 50%;top:225.27px;font-size:7.20px;transform:scaleX(0.820);color:#222">Stok Kartı Sayısı = 19</div>
<div class="a" style="left:105px;top:250px;width:588px;height:270px;background:#fff"></div>
<div class="a" style="left:105px;top:250px;width:10px;height:219px;background:#edf2fa"></div>
<div class="a" style="left:183px;top:250px;width:1px;height:270px;background:#e3e7ec"></div>
<div class="a" style="left:239px;top:250px;width:1px;height:270px;background:#e3e7ec"></div>
<div class="a" style="left:318px;top:250px;width:1px;height:270px;background:#e3e7ec"></div>
<div class="a" style="left:451px;top:250px;width:1px;height:270px;background:#e3e7ec"></div>
<div class="a" style="left:504px;top:250px;width:1px;height:270px;background:#e3e7ec"></div>
<div class="a" style="left:530px;top:250px;width:1px;height:270px;background:#e3e7ec"></div>
<div class="a" style="left:556px;top:250px;width:1px;height:270px;background:#e3e7ec"></div>
<div class="a" style="left:582px;top:250px;width:1px;height:270px;background:#e3e7ec"></div>
<div class="a" style="left:608px;top:250px;width:1px;height:270px;background:#e3e7ec"></div>
<div class="a" style="left:661px;top:250px;width:1px;height:270px;background:#e3e7ec"></div>
<div class="a" style="left:115px;top:250px;width:1px;height:219px;background:#e6ebf1"></div>
<div class="a" style="left:105px;top:293.5px;width:588px;height:1px;background:#e9ecef"></div>
<div class="a" style="left:105px;top:337px;width:588px;height:1px;background:#e9ecef"></div>
<div class="a" style="left:105px;top:380.5px;width:588px;height:1px;background:#e9ecef"></div>
<div class="a" style="left:105px;top:424.5px;width:588px;height:1px;background:#e9ecef"></div>
<div class="a" style="left:105px;top:469px;width:588px;height:44px;background:linear-gradient(#fdf0cb,#fbe4a6 50%,#fae09a 75%,#fbe8b4);border-top:1px solid #e8cf98;border-bottom:1px solid #e3c283"></div>
<div class="a" style="left:105px;top:469px;width:10px;height:44px;background:linear-gradient(#f2ad2a,#f7cb62 40%,#f6c65a 70%,#f9dc93);border-top:1px solid #e8cf98;border-bottom:1px solid #e3c283"></div>
<div class="a" style="left:115px;top:469px;width:1px;height:44px;background:rgba(220,190,130,0.35)"></div>
<svg style="left:107px;top:488px" width="6" height="7"><path d="M1.2 0.8 L4.6 3.3 L1.2 5.8 Z" fill="none" stroke="#806020" stroke-width="0.7"/></svg>
<div class="a" style="left:183px;top:470px;width:1px;height:42px;background:rgba(225,200,150,0.35)"></div>
<div class="a" style="left:239px;top:470px;width:1px;height:42px;background:rgba(225,200,150,0.35)"></div>
<div class="a" style="left:318px;top:470px;width:1px;height:42px;background:rgba(225,200,150,0.35)"></div>
<div class="a" style="left:451px;top:470px;width:1px;height:42px;background:rgba(225,200,150,0.35)"></div>
<div class="a" style="left:504px;top:470px;width:1px;height:42px;background:rgba(225,200,150,0.35)"></div>
<div class="a" style="left:530px;top:470px;width:1px;height:42px;background:rgba(225,200,150,0.35)"></div>
<div class="a" style="left:556px;top:470px;width:1px;height:42px;background:rgba(225,200,150,0.35)"></div>
<div class="a" style="left:582px;top:470px;width:1px;height:42px;background:rgba(225,200,150,0.35)"></div>
<div class="a" style="left:608px;top:470px;width:1px;height:42px;background:rgba(225,200,150,0.35)"></div>
<div class="a" style="left:661px;top:470px;width:1px;height:42px;background:rgba(225,200,150,0.35)"></div>
<div class="t" style="left:185.5px;transform-origin:0 50%;top:269.30px;font-size:7.14px;transform:scaleX(0.820);color:#262626">Boyalı Kumaş</div>
<div class="t" style="left:241px;transform-origin:0 50%;top:269.30px;font-size:7.14px;transform:scaleX(0.820);color:#262626">B DEN.0001</div>
<div class="t" style="left:320.5px;transform-origin:0 50%;top:269.30px;font-size:7.14px;transform:scaleX(0.820);color:#262626">P75017 Denim Kumaşı</div>
<div class="t" style="left:452.8px;transform-origin:0 50%;top:269.30px;font-size:7.14px;transform:scaleX(0.820);color:#262626">DENIM KUMAŞ</div>
<div class="t" style="left:506px;transform-origin:0 50%;top:269.30px;font-size:7.14px;transform:scaleX(0.820);color:#262626">MT</div>
<div class="t" style="left:557.5px;transform-origin:0 50%;top:269.30px;font-size:7.14px;transform:scaleX(0.820);color:#262626">8,00</div>
<div class="t" style="left:583.5px;transform-origin:0 50%;top:269.30px;font-size:7.14px;transform:scaleX(0.820);color:#262626">Malze..</div>
<div class="t" style="left:185.5px;transform-origin:0 50%;top:313.05px;font-size:7.14px;transform:scaleX(0.820);color:#262626">Boyalı Kumaş</div>
<div class="t" style="left:241px;transform-origin:0 50%;top:313.05px;font-size:7.14px;transform:scaleX(0.820);color:#262626">B DEN.0003</div>
<div class="t" style="left:320.5px;transform-origin:0 50%;top:313.05px;font-size:7.14px;transform:scaleX(0.820);color:#262626">P75019 Denim Kumaşı</div>
<div class="t" style="left:452.8px;transform-origin:0 50%;top:313.05px;font-size:7.14px;transform:scaleX(0.820);color:#262626">DENIM KUMAŞ</div>
<div class="t" style="left:506px;transform-origin:0 50%;top:313.05px;font-size:7.14px;transform:scaleX(0.820);color:#262626">KG</div>
<div class="t" style="left:557.5px;transform-origin:0 50%;top:313.05px;font-size:7.14px;transform:scaleX(0.820);color:#262626">8,00</div>
<div class="t" style="left:583.5px;transform-origin:0 50%;top:313.05px;font-size:7.14px;transform:scaleX(0.820);color:#262626">Malze..</div>
<div class="t" style="left:185.5px;transform-origin:0 50%;top:356.55px;font-size:7.14px;transform:scaleX(0.820);color:#262626">Boyalı Kumaş</div>
<div class="t" style="left:241px;transform-origin:0 50%;top:356.55px;font-size:7.14px;transform:scaleX(0.820);color:#262626">B DEN.0004</div>
<div class="t" style="left:320.5px;transform-origin:0 50%;top:356.55px;font-size:7.14px;transform:scaleX(0.820);color:#262626">P75017 Denim Kumaşı</div>
<div class="t" style="left:452.8px;transform-origin:0 50%;top:356.55px;font-size:7.14px;transform:scaleX(0.820);color:#262626">DENIM KUMAŞ</div>
<div class="t" style="left:506px;transform-origin:0 50%;top:356.55px;font-size:7.14px;transform:scaleX(0.820);color:#262626">MT</div>
<div class="t" style="left:557.5px;transform-origin:0 50%;top:356.55px;font-size:7.14px;transform:scaleX(0.820);color:#262626">8,00</div>
<div class="t" style="left:583.5px;transform-origin:0 50%;top:356.55px;font-size:7.14px;transform:scaleX(0.820);color:#262626">Malze..</div>
<div class="t" style="left:185.5px;transform-origin:0 50%;top:400.30px;font-size:7.14px;transform:scaleX(0.820);color:#262626">Boyalı Kumaş</div>
<div class="t" style="left:241px;transform-origin:0 50%;top:400.30px;font-size:7.14px;transform:scaleX(0.820);color:#262626">B DEN.0005</div>
<div class="t" style="left:320.5px;transform-origin:0 50%;top:400.30px;font-size:7.14px;transform:scaleX(0.820);color:#262626">P 99522 Denim Kumaşı</div>
<div class="t" style="left:452.8px;transform-origin:0 50%;top:400.30px;font-size:7.14px;transform:scaleX(0.820);color:#262626">DENIM KUMAŞ</div>
<div class="t" style="left:506px;transform-origin:0 50%;top:400.30px;font-size:7.14px;transform:scaleX(0.820);color:#262626">MT</div>
<div class="t" style="left:557.5px;transform-origin:0 50%;top:400.30px;font-size:7.14px;transform:scaleX(0.820);color:#262626">8,00</div>
<div class="t" style="left:583.5px;transform-origin:0 50%;top:400.30px;font-size:7.14px;transform:scaleX(0.820);color:#262626">Malze..</div>
<div class="t" style="left:185.5px;transform-origin:0 50%;top:444.30px;font-size:7.14px;transform:scaleX(0.820);color:#262626">Boyalı Kumaş</div>
<div class="t" style="left:241px;transform-origin:0 50%;top:444.30px;font-size:7.14px;transform:scaleX(0.820);color:#262626">B DEN.0006</div>
<div class="t" style="left:320.5px;transform-origin:0 50%;top:444.30px;font-size:7.14px;transform:scaleX(0.820);color:#262626">P75066 Denim Kumaşı</div>
<div class="t" style="left:452.8px;transform-origin:0 50%;top:444.30px;font-size:7.14px;transform:scaleX(0.820);color:#262626">DENIM KUMAŞ</div>
<div class="t" style="left:506px;transform-origin:0 50%;top:444.30px;font-size:7.14px;transform:scaleX(0.820);color:#262626">MT</div>
<div class="t" style="left:557.5px;transform-origin:0 50%;top:444.30px;font-size:7.14px;transform:scaleX(0.820);color:#262626">8,00</div>
<div class="t" style="left:583.5px;transform-origin:0 50%;top:444.30px;font-size:7.14px;transform:scaleX(0.820);color:#262626">Malze..</div>
<div class="t" style="left:185.5px;transform-origin:0 50%;top:488.30px;font-size:7.14px;transform:scaleX(0.820);color:#262626">Boyalı Kumaş</div>
<div class="t" style="left:241px;transform-origin:0 50%;top:488.30px;font-size:7.14px;transform:scaleX(0.820);color:#262626">B DEN.0007</div>
<div class="t" style="left:320.5px;transform-origin:0 50%;top:488.30px;font-size:7.14px;transform:scaleX(0.820);color:#262626">P 55226 Denim Kumaşı</div>
<div class="t" style="left:452.8px;transform-origin:0 50%;top:488.30px;font-size:7.14px;transform:scaleX(0.820);color:#262626">DENIM KUMAŞ</div>
<div class="t" style="left:506px;transform-origin:0 50%;top:488.30px;font-size:7.14px;transform:scaleX(0.820);color:#262626">MT</div>
<div class="t" style="left:557.5px;transform-origin:0 50%;top:488.30px;font-size:7.14px;transform:scaleX(0.820);color:#262626">8,00</div>
<div class="t" style="left:583.5px;transform-origin:0 50%;top:488.30px;font-size:7.14px;transform:scaleX(0.820);color:#262626">Malze..</div>
<div class="a" style="left:318px;top:469px;width:133px;height:44px;border:1px solid #e59a4c"></div>
<div class="a" style="left:130px;top:251.3px;width:40px;height:41px;background:radial-gradient(circle at 55% 52%,#c4bdb0 0,transparent 12%),conic-gradient(from 30deg at 55% 52%,#e9e5dd,#d0cabd 14%,#ebe8e1 27%,#d5cfc3 44%,#e7e3da 60%,#cec7b9 76%,#e9e5dd);isolation:isolate;overflow:hidden"><svg style="left:0;top:0;mix-blend-mode:overlay;opacity:0.2" width="40" height="41"><filter id="nz2" x="0" y="0" width="100%" height="100%"><feTurbulence type="fractalNoise" baseFrequency="0.9" numOctaves="2" seed="2"/><feColorMatrix values="1.6 0 0 0 -0.3  1.6 0 0 0 -0.3  1.6 0 0 0 -0.3  0 0 0 0 1"/></filter><rect width="40" height="41" filter="url(#nz2)"/></svg></div>
<div class="a" style="left:120px;top:295.2px;width:59px;height:41px;background:radial-gradient(circle,#e4e7ec 0.4px,transparent 0.9px) 0 0/3px 3px,radial-gradient(circle,#e4e7ec 0.4px,transparent 0.9px) 1.5px 1.5px/3px 3px,#3b4253;isolation:isolate;overflow:hidden"><svg style="left:0;top:0;mix-blend-mode:overlay;opacity:0.2" width="59" height="41"><filter id="nz3" x="0" y="0" width="100%" height="100%"><feTurbulence type="fractalNoise" baseFrequency="0.9" numOctaves="2" seed="3"/><feColorMatrix values="1.6 0 0 0 -0.3  1.6 0 0 0 -0.3  1.6 0 0 0 -0.3  0 0 0 0 1"/></filter><rect width="59" height="41" filter="url(#nz3)"/></svg></div>
<div class="a" style="left:117px;top:340.7px;width:65px;height:38px;background:radial-gradient(circle at 55% 55%,#6e5a3c 0,#8a7350 6%,transparent 16%),conic-gradient(from 10deg at 55% 55%,#ad936e,#8f7654 12%,#b39872 26%,#967d5a 40%,#b0956d 55%,#8c7350 70%,#ad936e 85%,#987f5c);isolation:isolate;overflow:hidden"><svg style="left:0;top:0;mix-blend-mode:overlay;opacity:0.3" width="65" height="38"><filter id="nz4" x="0" y="0" width="100%" height="100%"><feTurbulence type="fractalNoise" baseFrequency="0.9" numOctaves="2" seed="4"/><feColorMatrix values="1.6 0 0 0 -0.3  1.6 0 0 0 -0.3  1.6 0 0 0 -0.3  0 0 0 0 1"/></filter><rect width="65" height="38" filter="url(#nz4)"/></svg></div>
<div class="a" style="left:122px;top:383px;width:55px;height:42px;background:radial-gradient(ellipse at 88% 8%,#3a3733 0,transparent 30%),radial-gradient(ellipse at 95% 95%,#4a4743 0,transparent 25%),linear-gradient(160deg,#938c83 0%,#aba49a 22%,#80796f 36%,#b2aba1 50%,#a0998f 64%,#6b645c 84%,#8e877d 100%);isolation:isolate;overflow:hidden"><svg style="left:0;top:0;mix-blend-mode:overlay;opacity:0.25" width="55" height="42"><filter id="nz5" x="0" y="0" width="100%" height="100%"><feTurbulence type="fractalNoise" baseFrequency="0.9" numOctaves="2" seed="5"/><feColorMatrix values="1.6 0 0 0 -0.3  1.6 0 0 0 -0.3  1.6 0 0 0 -0.3  0 0 0 0 1"/></filter><rect width="55" height="42" filter="url(#nz5)"/></svg></div>
<div class="a" style="left:122.5px;top:426.2px;width:54px;height:41px;background:linear-gradient(#6480a6,#5a769c);isolation:isolate;overflow:hidden"><svg style="left:0;top:0;mix-blend-mode:overlay;opacity:0.3" width="54" height="41"><filter id="nz6" x="0" y="0" width="100%" height="100%"><feTurbulence type="fractalNoise" baseFrequency="0.3 1.4" numOctaves="2" seed="6"/><feColorMatrix values="1.6 0 0 0 -0.3  1.6 0 0 0 -0.3  1.6 0 0 0 -0.3  0 0 0 0 1"/></filter><rect width="54" height="41" filter="url(#nz6)"/></svg></div>
<div class="a" style="left:130px;top:470px;width:40px;height:42px;background:repeating-linear-gradient(0deg,rgba(255,255,255,.10) 0 1px,rgba(60,40,20,.07) 1px 2px),#a89c90;isolation:isolate;overflow:hidden"><svg style="left:0;top:0;mix-blend-mode:overlay;opacity:0.45" width="40" height="42"><filter id="nz7" x="0" y="0" width="100%" height="100%"><feTurbulence type="fractalNoise" baseFrequency="0.45 0.9" numOctaves="2" seed="8"/><feColorMatrix values="1.6 0 0 0 -0.3  1.6 0 0 0 -0.3  1.6 0 0 0 -0.3  0 0 0 0 1"/></filter><rect width="40" height="42" filter="url(#nz7)"/></svg></div>
<div class="a" style="left:693px;top:176px;width:9px;height:343px;background:#e9eff8;border-left:1px solid #d5deea"></div>
<div class="a" style="left:693px;top:176px;width:9px;height:10px;background:linear-gradient(90deg,#d6e4f5,#b9cfea);border:1px solid #9fb6d6"></div>
<div class="a" style="left:693px;top:186px;width:9px;height:115px;background:linear-gradient(90deg,#cfe0f4,#a9c3e6);border:1px solid #9fb6d6"></div>
<div class="a" style="left:693px;top:509px;width:9px;height:10px;background:linear-gradient(90deg,#d6e4f5,#b9cfea);border:1px solid #9fb6d6"></div>
<svg style="left:693px;top:176px" width="9" height="343"><path d="M2.5 6 L4.5 3.5 L6.5 6Z" fill="#4a5a70"/><path d="M2.5 336.5 L4.5 339 L6.5 336.5Z" fill="#4a5a70"/><path d="M3 65H6M3 67H6M3 69H6" stroke="#8aa0bc" stroke-width=".6"/></svg>
<div class="a" style="left:105px;top:520px;width:597px;height:9px;background:#e9eff8;border-top:1px solid #d5deea"></div>
<div class="a" style="left:105px;top:520px;width:10px;height:9px;background:linear-gradient(#d6e4f5,#b9cfea);border:1px solid #9fb6d6"></div>
<div class="a" style="left:115px;top:520px;width:434px;height:9px;background:linear-gradient(#d8e6f6,#b2cbea);border:1px solid #9fb6d6"></div>
<div class="a" style="left:683px;top:520px;width:10px;height:9px;background:linear-gradient(#d6e4f5,#b9cfea);border:1px solid #9fb6d6"></div>
<svg style="left:105px;top:519.5px" width="588" height="10"><path d="M6 3 L3.5 5 L6 7Z" fill="#4a5a70"/><path d="M582 3 L584.5 5 L582 7Z" fill="#4a5a70"/><path d="M224 3.5V6.5M226 3.5V6.5M228 3.5V6.5" stroke="#8aa0bc" stroke-width=".6"/></svg>
<div class="a" style="left:693px;top:519px;width:9px;height:10px;background:#fff"></div>
<div class="a" style="left:703px;top:162px;width:215px;height:367px;background:#e7eef9"></div>
<div class="a" style="left:702px;top:163px;width:5px;height:366px;background:#f3f6fb"></div>
<svg style="left:710px;top:164px" width="56" height="20"><path d="M0.5 20 V1 H54.5 V20" fill="#f7fafd" stroke="#cdd9e8" stroke-width="0.8"/></svg>
<svg style="left:716px;top:167px" width="11" height="14"><path d="M3 2 H8 L9 4 V10 H2 V4 Z" fill="#ece6da"/><path d="M4 5 H7 M4 7 H7" stroke="#e0c890" stroke-width="1"/><circle cx="5.5" cy="1.5" r="1" fill="#aaa"/><path d="M1 12 Q5.5 10 10 12 V13 H1Z" fill="#b0b0b0"/></svg>
<div class="t" style="left:729px;transform-origin:0 50%;top:170.41px;font-size:7.32px;transform:scaleX(0.820);color:#45566c">Kart Detayı</div>
<svg style="left:900px;top:170px" width="16" height="8"><path d="M4.5 0.5 L1.5 3.5 L4.5 6.5 Z M11.5 0.5 L14.5 3.5 L11.5 6.5 Z" fill="none" stroke="#8a96a6" stroke-width="0.8"/></svg>
<div class="a" style="left:707px;top:183px;width:211px;height:346px;background:#fff;border-left:1px solid #d5deea"></div>
<div class="a" style="left:737px;top:186px;width:150px;height:156px;background:repeating-linear-gradient(0deg,rgba(255,255,255,.10) 0 1px,rgba(60,40,20,.07) 1px 2px),repeating-linear-gradient(90deg,rgba(255,255,255,.08) 0 1px,rgba(60,40,20,.05) 1px 2px),#ad9e8f;isolation:isolate;overflow:hidden"><svg style="left:0;top:0;mix-blend-mode:overlay;opacity:0.5" width="150" height="156"><filter id="nz8" x="0" y="0" width="100%" height="100%"><feTurbulence type="fractalNoise" baseFrequency="0.4 0.9" numOctaves="2" seed="9"/><feColorMatrix values="1.6 0 0 0 -0.3  1.6 0 0 0 -0.3  1.6 0 0 0 -0.3  0 0 0 0 1"/></filter><rect width="150" height="156" filter="url(#nz8)"/></svg></div>
<div class="t" style="left:712px;transform-origin:0 50%;top:344.97px;font-size:7.20px;transform:scaleX(0.820);color:#26354a">Resim Tipi</div>
<div class="a" style="left:756px;top:344px;width:68px;height:11px;background:#fff;border:1px solid #b4c3d6"></div>
<div class="a" style="left:815px;top:345px;width:8px;height:9px;background:linear-gradient(#e4eefa,#c4d7ef);border-left:1px solid #b4c3d6"></div>
<svg style="left:817px;top:348px" width="5" height="4"><path d="M0.5 0.5 H4.5 L2.5 3 Z" fill="#3a4a60"/></svg>
<div class="t" style="left:758px;transform-origin:0 50%;top:346.00px;font-size:7.14px;transform:scaleX(0.820);color:#111">Stok Kart Resmi</div>
<div class="a" style="left:824px;top:342.5px;width:45px;height:14px;background:linear-gradient(#e8eff9,#d2dfef);border:1px solid #c9d6e7;border-radius:0 2px 2px 0"></div>
<svg style="left:825.5px;top:344.5px" width="10" height="11"><rect x="0.5" y="0.5" width="8" height="7.5" fill="url(#mon)" stroke="#2f6db8" stroke-width="0.6"/><rect x="0.5" y="8.5" width="8.5" height="2" fill="#d9a520" stroke="#333" stroke-width="0.4"/><defs><linearGradient id="mon" x1="0" y1="0" x2="0" y2="1"><stop offset="0" stop-color="#8cc8f8"/><stop offset="1" stop-color="#2f7ad0"/></linearGradient></defs></svg>
<div class="t" style="left:835.5px;transform-origin:0 50%;top:346.01px;font-size:7.32px;transform:scaleX(0.820);color:#34507a">Sil</div>
<div class="a" style="left:869px;top:342.5px;width:46.5px;height:14px;background:linear-gradient(#e8eff9,#d2dfef);border:1px solid #c9d6e7;border-radius:2px"></div>
<svg style="left:871px;top:344.5px" width="9" height="11"><path d="M1.5 0.5 H6 L8 2.5 V10 H1.5 Z" fill="#f4f4f2" stroke="#c8c8c4" stroke-width="0.6"/></svg>
<div class="t" style="left:880.5px;transform-origin:0 50%;top:346.01px;font-size:7.32px;transform:scaleX(0.820);color:#34507a">Resim ekle</div>
<div class="t" style="left:716px;transform-origin:0 50%;top:357.47px;font-size:7.20px;transform:scaleX(0.820);color:#26354a">Stok Durumu</div>
<div class="a" style="left:709.5px;top:367px;width:205px;height:158px;background:#fff;border:1px solid #cfd9e6"></div>
<div class="a" style="left:710.5px;top:368px;width:203px;height:12px;background:#edf2fa"></div>
<div class="t" style="left:612px;width:400px;text-align:center;transform-origin:50% 50%;top:371.24px;font-size:7.26px;transform:scaleX(0.820);color:#2b2b2b">Gruplamak için kolon başlığını buraya sürükleyip bırakınız.</div>
<div class="a" style="left:710.5px;top:380px;width:169px;height:16.5px;background:linear-gradient(#e5edf7,#d2e0f0);border-bottom:1px solid #b9cade"></div>
<div class="a" style="left:720.5px;top:380px;width:1px;height:43px;background:#c4d2e3"></div>
<div class="a" style="left:773.5px;top:380px;width:1px;height:43px;background:#c4d2e3"></div>
<div class="a" style="left:852px;top:380px;width:1px;height:16.5px;background:#c4d2e3"></div>
<div class="t" style="left:722px;transform-origin:0 50%;top:384.97px;font-size:7.20px;transform:scaleX(0.820);color:#26354a">Şube</div>
<div class="t" style="left:451px;width:400px;text-align:right;transform-origin:100% 50%;top:384.97px;font-size:7.20px;transform:scaleX(0.820);color:#26354a">Bakiye</div>
<div class="t" style="left:853px;transform-origin:0 50%;top:384.97px;font-size:7.20px;transform:scaleX(0.820);color:#26354a">Birim</div>
<div class="a" style="left:710.5px;top:396.5px;width:169px;height:13.5px;background:linear-gradient(#fdefc6,#fbe0a0);border-bottom:1px solid #e6c27e"></div>
<div class="a" style="left:710.5px;top:396.5px;width:10px;height:13.5px;background:#f6c85a"></div>
<div class="a" style="left:720.5px;top:396.5px;width:53px;height:13.5px;border:1px solid #e8953a"></div>
<div class="t" style="left:712px;transform-origin:0 50%;top:400.01px;font-size:6.10px;transform:scaleX(0.820);color:#806020">D</div>
<div class="t" style="left:854px;transform-origin:0 50%;top:399.67px;font-size:7.20px;transform:scaleX(0.820);color:#222;font-weight:bold">MT</div>
<div class="a" style="left:710.5px;top:410px;width:169px;height:13px;background:#e9eff8"></div>
<div class="a" style="left:720.5px;top:410px;width:1px;height:13px;background:#d5deea"></div>
<div class="a" style="left:773.5px;top:410px;width:1px;height:13px;background:#d5deea"></div>
<div class="t" style="left:451.5px;width:400px;text-align:right;transform-origin:100% 50%;top:412.97px;font-size:7.20px;transform:scaleX(0.820);color:#222">Toplam Stok = 0,00</div>
</body></html>
